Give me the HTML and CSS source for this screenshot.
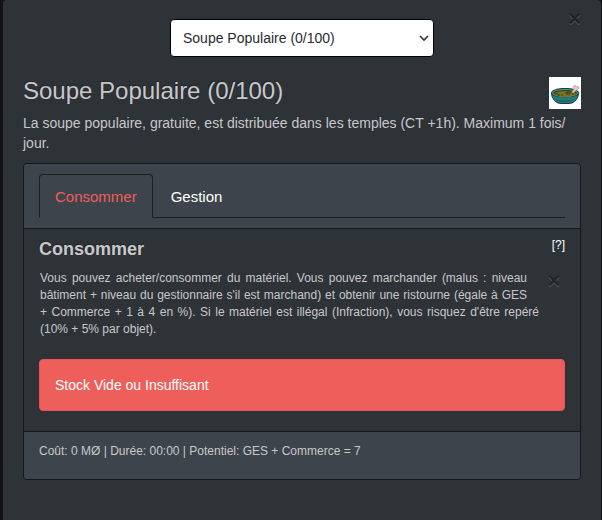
FILE: index.html
```html
<!DOCTYPE html>
<html lang="fr">
<head>
    <meta charset="UTF-8">
    <meta name="viewport" content="width=device-width, initial-scale=1.0">
    <title>Soupe Populaire</title>

    <link rel="stylesheet" href="styles.css">
</head>
<body>
    <main class="modal-content">
        <div class="modal-header">
            <select class="custom-select" aria-label="Bâtiment">
                <option>Soupe Populaire (0/100)</option>
            </select>
            <button type="button" class="close modal-close" aria-label="Fermer">×</button>
        </div>

        <div class="title-row">
            <h1>Soupe Populaire (0/100)</h1>
            <svg class="soup" viewBox="0 0 32 32" role="img" aria-label="Soupe">
                <rect width="32" height="32" fill="#fff"/>
                <path d="M2 16C2 13 8 11 16 11s14 2 14 5c0 6-5 11-10 11h-8C7 27 2 22 2 16z" fill="#183c40"/>
                <path d="M3 18c4 3 22 3 26 0-1 4-4 8-9 8h-8c-5 0-8-4-9-8z" fill="#267c7d"/>
                <path d="M7 22c5 2 13 2 18 0-2 2-4 3-7 3h-5c-3 0-5-1-6-3z" fill="#1b6367"/>
                <ellipse cx="16" cy="16" rx="13" ry="4" fill="#4aa09b"/>
                <ellipse cx="16" cy="16" rx="12" ry="3" fill="#34390f"/>
                <ellipse cx="16" cy="17" rx="11" ry="3" fill="#777524"/>
                <path d="M6 17h3v1h2M16 16h2v-1h3v2h-4M12 18h2M23 17h2" fill="none" stroke="#343f13"/>
                <path d="M23 15l2-3-1-2 2-2 1 2 2-1 1 2-2 2-2 1-1 2z" fill="#e7c9bd" stroke="#b08c82" stroke-width=".6"/>
            </svg>
        </div>
        <p class="description">La soupe populaire, gratuite, est distribuée dans les temples (CT +1h). Maximum 1 fois/<wbr>jour.</p>

        <section class="card">
            <div class="card-header">
                <nav class="nav-tabs">
                    <a class="nav-link active" href="#consommer">Consommer</a>
                    <a class="nav-link" href="#gestion">Gestion</a>
                </nav>
            </div>
            <div class="card-body" id="consommer">
                <div class="card-title">
                    <h2>Consommer</h2>
                    <a class="help-link" href="#aide">[?]</a>
                </div>
                <div class="help" id="aide">
                    <button type="button" class="close help-close" aria-label="Fermer l'aide">×</button>
                    <p>Vous pouvez acheter/consommer du matériel. Vous pouvez marchander (malus : niveau bâtiment + niveau du gestionnaire s'il est marchand) et obtenir une ristourne (égale à GES + Commerce + 1 à 4 en %). Si le matériel est illégal (Infraction), vous risquez d'être repéré (10% + 5% par objet).</p>
                </div>
                <div class="alert" role="alert">Stock Vide ou Insuffisant</div>
            </div>
            <div class="card-footer">Coût: 0 MØ | Durée: 00:00 | Potentiel: GES + Commerce = 7</div>
        </section>
    </main>
</body>
</html>
```

FILE: styles.css
```css
* {
    box-sizing: border-box;
}
body {
    margin: 0;
    background-color: #111316;
    color: #c8c8c8;
    font-family: "Liberation Sans", Arial, sans-serif;
    font-size: 14px;
    line-height: 20px;
}
h1, h2, p {
    margin: 0;
}
a {
    color: #fff;
    text-decoration: none;
}
.modal-content {
    min-height: 100vh;
    margin: 0 1px 0 3px;
    padding: 19px 20px 40px;
    background-color: #2e3338;
    border-radius: 4px 4px 0 0;
}
.modal-header {
    position: relative;
    display: flex;
    justify-content: center;
}
.custom-select {
    width: 264px;
    height: 38px;
    padding: 0 32px 0 12px;
    border: 1px solid #000;
    border-radius: 4px;
    appearance: none;
    background: #fff url("data:image/svg+xml,%3Csvg xmlns='http://www.w3.org/2000/svg' width='10' height='7'%3E%3Cpath d='M1 1l4 4 4-4' fill='none' stroke='%23333' stroke-width='1.6'/%3E%3C/svg%3E") no-repeat right 4px center;
    color: #272b30;
    font-family: inherit;
    font-size: 14px;
}
.close {
    padding: 0;
    border: 0;
    background: none;
    color: #202428;
    font-family: inherit;
    font-size: 22px;
    font-weight: bold;
    line-height: 22px;
    text-shadow: 0 1px 0 #5c6064;
    cursor: pointer;
}
.modal-close {
    position: absolute;
    top: -11px;
    right: 0;
}
.title-row {
    display: flex;
    align-items: center;
    justify-content: space-between;
    margin: 20px 0 4px;
}
h1, h2 {
    text-shadow: -1px -1px 0 rgba(0, 0, 0, 0.3);
}
h1 {
    font-size: 24px;
    font-weight: normal;
    line-height: 24px;
    padding-bottom: 4px;
}
.soup {
    width: 32px;
    height: 32px;
}
.description {
    margin-bottom: 10px;
}
.card {
    border: 1px solid #15181b;
    border-radius: 4px;
    overflow: hidden;
}
.card-header {
    padding: 10px 15px;
    background-color: #3e444c;
    border-bottom: 1px solid #15181b;
}
.nav-tabs {
    display: flex;
    border-bottom: 1px solid #1c1e22;
}
.nav-link {
    margin-bottom: -1px;
    padding: 12px 15px 10px;
    border: 1px solid transparent;
    border-radius: 4px 4px 0 0;
    font-size: 15px;
}
.nav-link + .nav-link {
    margin-left: 2px;
}
.nav-link.active {
    border-color: #1c1e22 #1c1e22 #3e444c;
    background-color: #3e444c;
    color: #ee5f5b;
}
.card-body {
    padding: 8px 15px 20px;
}
.card-title {
    display: flex;
    justify-content: space-between;
    margin-bottom: 9px;
}
h2 {
    font-size: 18px;
    line-height: 24px;
}
.help-link {
    font-size: 12px;
    line-height: 16px;
}
.help {
    margin-bottom: 21px;
    padding: 0 26px 0 1px;
    font-size: 12px;
    line-height: 17px;
    text-align: justify;
}
.help-close {
    float: right;
    width: 38px;
    height: 34px;
    margin-right: -26px;
    padding: 0 0 14px 16px;
}
.alert {
    padding: 15px;
    border: 1px solid #ed4f5f;
    border-radius: 4px;
    background-color: #ee5f5b;
    color: #fff;
}
.card-footer {
    padding: 10px 15px 19px;
    background-color: #3e444c;
    border-top: 1px solid #15181b;
    font-size: 12px;
    line-height: 18px;
}
```
